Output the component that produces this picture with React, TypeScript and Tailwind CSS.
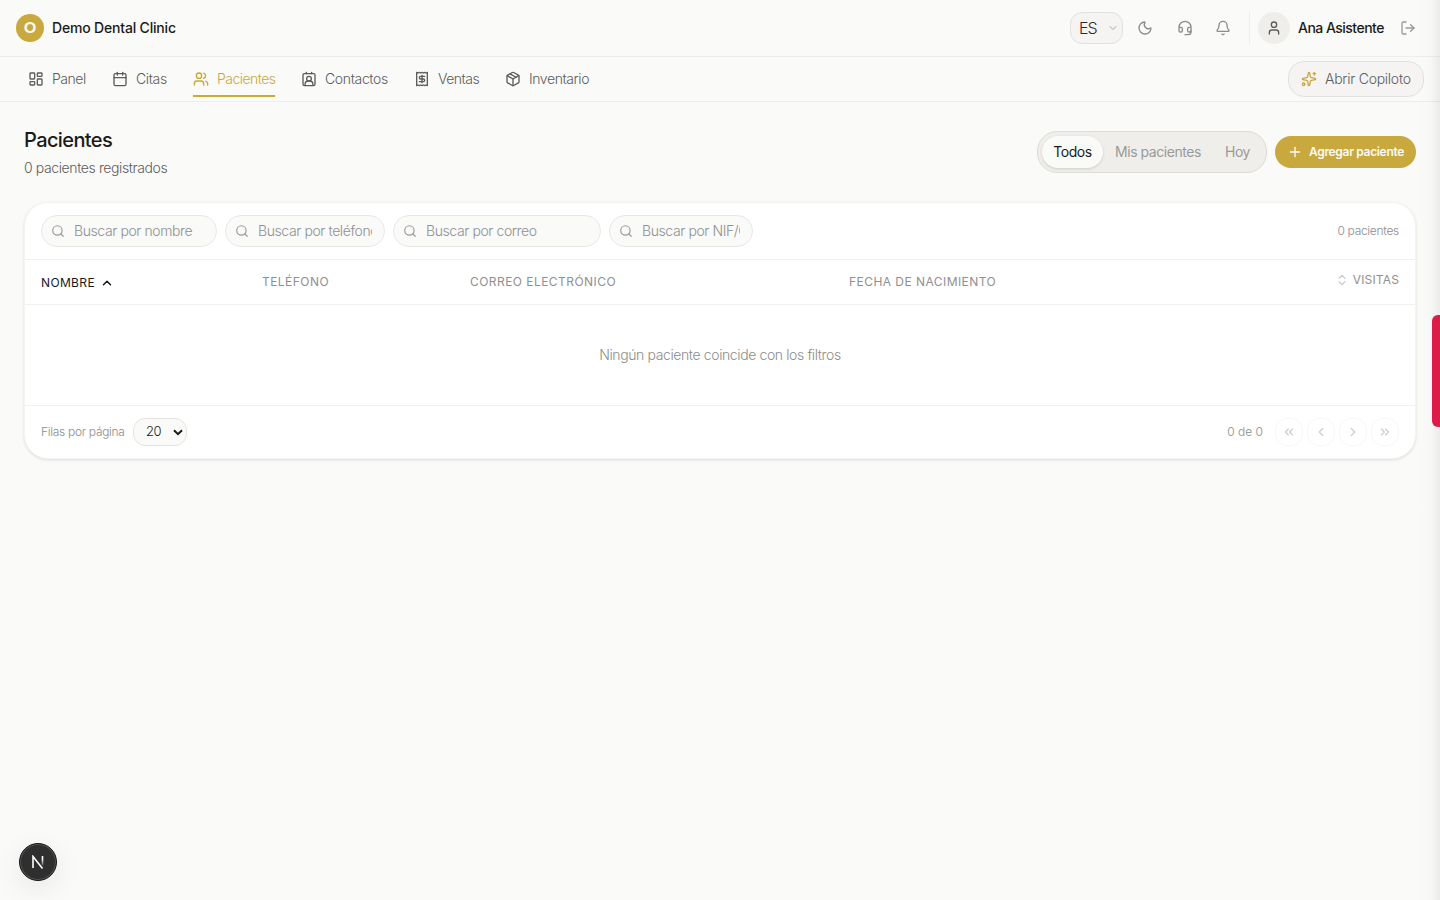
import { useState } from 'react';
import {
  Bell,
  Calendar,
  ChevronDown,
  ChevronLeft,
  ChevronRight,
  ChevronsLeft,
  ChevronsRight,
  ChevronsUpDown,
  ChevronUp,
  Headset,
  LayoutDashboard,
  LogOut,
  Moon,
  Package,
  Plus,
  Search,
  Sparkles,
  User,
  Users,
} from 'lucide-react';
import clsx from 'clsx';

function ContactIcon() {
  return (
    <svg width="16" height="16" viewBox="0 0 24 24" fill="none" stroke="currentColor" strokeWidth="2" strokeLinecap="round" strokeLinejoin="round">
      <path d="M16 2v2M8 2v2M17.9 21v-1a5 5 0 0 0-5-5h-1.8a5 5 0 0 0-5 5v1" />
      <circle cx="12" cy="11.5" r="3.5" />
      <rect x="3" y="4" width="18" height="18" rx="2" />
    </svg>
  );
}

function ReceiptIcon() {
  return (
    <svg width="16" height="16" viewBox="0 0 24 24" fill="none" stroke="currentColor" strokeWidth="2" strokeLinecap="round" strokeLinejoin="round">
      <path d="M4 2v20l2-1 2 1 2-1 2 1 2-1 2 1 2-1 2 1V2l-2 1-2-1-2 1-2-1-2 1-2-1-2 1Z" />
      <path d="M16 8h-6a2 2 0 1 0 0 4h4a2 2 0 1 1 0 4H8" />
      <path d="M12 17.5v-11" />
    </svg>
  );
}

const NAV = [
  { label: 'Panel', icon: <LayoutDashboard size={16} />, width: 'w-[58px] tracking-[-0.45px]' },
  { label: 'Citas', icon: <Calendar size={16} />, width: 'w-[55px] tracking-[-0.38px]' },
  { label: 'Pacientes', icon: <Users size={16} />, width: 'w-[82px] tracking-[-0.55px]', active: true },
  { label: 'Contactos', icon: <ContactIcon />, width: 'w-[87px] tracking-[-0.36px]' },
  { label: 'Ventas', icon: <ReceiptIcon />, width: 'w-[65px] tracking-[-0.5px]' },
  { label: 'Inventario', icon: <Package size={16} />, width: 'w-[84px] tracking-[-0.42px]' },
];

const FILTERS = [
  { placeholder: 'Buscar por nombre', width: 'w-44' },
  { placeholder: 'Buscar por teléfono', width: 'w-40' },
  { placeholder: 'Buscar por correo', width: 'w-52' },
  { placeholder: 'Buscar por NIF/CIF', width: 'w-36' },
];

const TABS = [
  { label: 'Todos', width: 'w-[61px]' },
  { label: 'Mis pacientes', width: 'w-[110px]' },
  { label: 'Hoy', width: 'w-[49px]' },
];

const PAGER = [ChevronsLeft, ChevronLeft, ChevronRight, ChevronsRight];

function Header() {
  return (
    <header className="flex h-[57px] items-center justify-between border-b border-[#eeedec] px-4">
      <div className="flex items-center gap-2">
        <div className="flex size-7 items-center justify-center rounded-full bg-[#c9a83e] pb-0.5 font-['Lato','Inter',sans-serif] text-[15px] font-black text-[#fafaf8]">
          O
        </div>
        <span className="pb-0.5 text-[14px] font-medium tracking-[-0.18px] text-[#1a1a1a]">Demo Dental Clinic</span>
      </div>
      <div className="flex items-center">
        <button className="flex h-8 w-[53px] items-center justify-between rounded-xl border border-[#e2e1df] bg-[#f5f4f2] pr-[3px] pl-2 text-[#2b2b2b]">
          <span className="text-[16px] font-light tracking-[-0.9px]">ES</span>
          <ChevronDown size={12} strokeWidth={1.75} className="text-[#9a9a9a]" />
        </button>
        <div className="ml-[14px] flex items-center text-[#8c8c8c]">
          <Moon size={16} />
          <Headset size={16} className="ml-6" />
          <Bell size={16} className="ml-[22px]" />
        </div>
        <div className="ml-[18px] h-8 w-px bg-[#eeedec]" />
        <div className="ml-2 flex size-8 items-center justify-center rounded-full bg-[#efeeeb] text-[#5c5c5c]">
          <User size={16} />
        </div>
        <span className="ml-2 w-[86px] pb-0.5 text-[14px] font-medium tracking-[-0.52px] whitespace-nowrap text-[#1a1a1a]">Ana Asistente</span>
        <LogOut size={16} className="mr-2 ml-4 text-[#9a9a9a]" />
      </div>
    </header>
  );
}

function NavBar() {
  return (
    <div className="flex h-[45px] items-center justify-between border-b border-[#eeedec] pr-4 pl-7">
      <nav className="flex gap-[26px]">
        {NAV.map((item) => (
          <a
            key={item.label}
            className={clsx(
              'flex h-9 items-center gap-2 border-b-2 pt-0.5 text-[14px] font-light whitespace-nowrap',
              item.width,
              item.active ? 'border-[#c9a83e] text-[#c9a83e]' : 'border-transparent text-[#5c5c5c]',
            )}
          >
            <span className="shrink-0">{item.icon}</span>
            <span className="pb-0.5">{item.label}</span>
          </a>
        ))}
      </nav>
      <button className="flex h-9 w-34 items-center gap-2 rounded-2xl border border-[#e2e1df] bg-[#f5f4f2] pl-3 text-[14px] font-light tracking-[-0.26px] whitespace-nowrap text-[#5c5c5c]">
        <Sparkles size={16} className="text-[#c9a83e]" />
        <span className="pb-0.5">Abrir Copiloto</span>
      </button>
    </div>
  );
}

function PatientsTable() {
  return (
    <section className="mt-6 overflow-hidden rounded-3xl border border-[#f4f4f3] bg-white shadow-[0_1px_3px_rgba(0,0,0,0.12)]">
      <div className="flex h-[57px] items-start gap-2 border-b border-[#f2f1f0] px-4 pt-3">
        {FILTERS.map((f) => (
          <label
            key={f.placeholder}
            className={clsx('flex h-8 items-center gap-[9px] rounded-2xl border border-[#e8e7e5] bg-[#fafaf8] pr-3 pl-[9px]', f.width)}
          >
            <Search size={14} className="shrink-0 text-[#9a9a9a]" />
            <input
              placeholder={f.placeholder}
              className="w-full min-w-0 bg-transparent pb-0.5 text-[14px] font-light tracking-[-0.4px] outline-none placeholder:text-[#8f8f8f]"
            />
          </label>
        ))}
        <span className="ml-auto text-[12px] leading-8 font-light tracking-[-0.3px] text-[#8c8c8c]">0 pacientes</span>
      </div>

      <div className="flex h-[45px] items-center border-b border-[#f2f1f0] px-4 text-[12px] tracking-[0.45px] text-[#8f8f8f]">
        <div className="flex w-[221px] items-center gap-[5px] pt-0.5 tracking-[0.35px] text-[#1a1a1a]">
          NOMBRE
          <ChevronUp size={14} strokeWidth={2.5} />
        </div>
        <div className="w-[208px]">TELÉFONO</div>
        <div className="w-[379px]">CORREO ELECTRÓNICO</div>
        <div>FECHA DE NACIMIENTO</div>
        <div className="ml-auto flex items-center gap-1 pb-1 tracking-[0.15px]">
          <ChevronsUpDown size={14} className="text-[#c8c8c8]" />
          VISITAS
        </div>
      </div>

      <div className="flex h-[101px] items-center justify-center border-b border-[#f2f1f0] pb-0.5 text-[14px] font-light tracking-[-0.39px] text-[#8c8c8c]">
        Ningún paciente coincide con los filtros
      </div>

      <div className="flex h-[52px] items-center px-4 text-[12px] font-light text-[#8c8c8c]">
        <span className="w-[92px] tracking-[-0.3px] whitespace-nowrap">Filas por página</span>
        <button className="flex h-7 w-[54px] items-center justify-between rounded-xl border border-[#e5e4e2] bg-[#fafaf8] pr-[3px] pl-3 text-[13px] tracking-[-0.5px] text-[#1a1a1a]">
          20
          <svg width="10" height="7" viewBox="0 0 10 7" fill="none" stroke="#1a1a1a" strokeWidth="2">
            <path d="M1 1.2 5 5.2 9 1.2" />
          </svg>
        </button>
        <span className="mr-3 ml-auto">0 de 0</span>
        <div className="flex gap-1">
          {PAGER.map((Icon, i) => (
            <button
              key={i}
              disabled
              className="flex size-7 items-center justify-center rounded-xl border border-[#e2e1df] text-[#5c5c5c] opacity-30"
            >
              <Icon size={14} strokeWidth={2.25} />
            </button>
          ))}
        </div>
      </div>
    </section>
  );
}

export default function App() {
  const [tab, setTab] = useState('Todos');

  return (
    <div className="relative h-screen overflow-hidden bg-[#fafaf8] font-['Inter','Liberation_Sans',sans-serif]">
      <Header />
      <NavBar />

      <main className="px-6 pt-6">
        <div className="flex items-center justify-between">
          <div>
            <h1 className="text-[20px] leading-7 font-medium tracking-[-0.6px] text-[#1a1a1a]">Pacientes</h1>
            <p className="mt-1 text-[14px] leading-5 font-light tracking-[-0.39px] text-[#5c5c5c]">0 pacientes registrados</p>
          </div>
          <div className="flex items-center gap-2">
            <div className="flex rounded-[20px] border border-[#dddcd8] bg-[#efeeeb] p-1">
              {TABS.map((item) => (
                <button
                  key={item.label}
                  onClick={() => setTab(item.label)}
                  className={clsx(
                    'h-8 rounded-2xl pb-px text-[14px] tracking-[-0.45px] whitespace-nowrap',
                    item.width,
                    item.label === tab
                      ? 'bg-[#fafaf8] text-[#1a1a1a] shadow-[0_1px_3px_rgba(0,0,0,0.14)]'
                      : 'text-[#9a9a9a]',
                  )}
                >
                  {item.label}
                </button>
              ))}
            </div>
            <button className="flex h-8 w-[141px] items-center gap-1.5 rounded-2xl bg-[#c9a83e] pl-3 text-[12px] font-semibold tracking-[-0.32px] whitespace-nowrap text-[#fafaf8]">
              <Plus size={16} />
              Agregar paciente
            </button>
          </div>
        </div>

        <PatientsTable />
      </main>

      {/* edge of the off-canvas drawer */}
      <div className="absolute inset-y-0 right-0 w-5 bg-linear-to-r from-transparent via-black/1 to-black/6" />
      <div className="absolute top-[315px] right-0 h-28 w-2 rounded-l-md bg-[#db1c48]" />

      <div className="absolute bottom-[19px] left-[19px] flex size-[38px] items-center justify-center rounded-full border border-[#171717] bg-[#2f2f2f] shadow-[0_8px_28px_rgba(0,0,0,0.08),inset_0_0_0_1px_rgba(255,255,255,0.18)]">
        <svg width="14" height="14" viewBox="0 0 14 14" fill="none" strokeWidth="1.6">
          <defs>
            <linearGradient id="stem" x1="0" y1="0" x2="0" y2="14" gradientUnits="userSpaceOnUse">
              <stop offset="0.3" stopColor="#fff" />
              <stop offset="0.85" stopColor="#fff" stopOpacity="0" />
            </linearGradient>
          </defs>
          <path d="M2 13V1.5L11.5 13.5" stroke="#fff" />
          <path d="M11.5 1v9.5" stroke="url(#stem)" />
        </svg>
      </div>
    </div>
  );
}
